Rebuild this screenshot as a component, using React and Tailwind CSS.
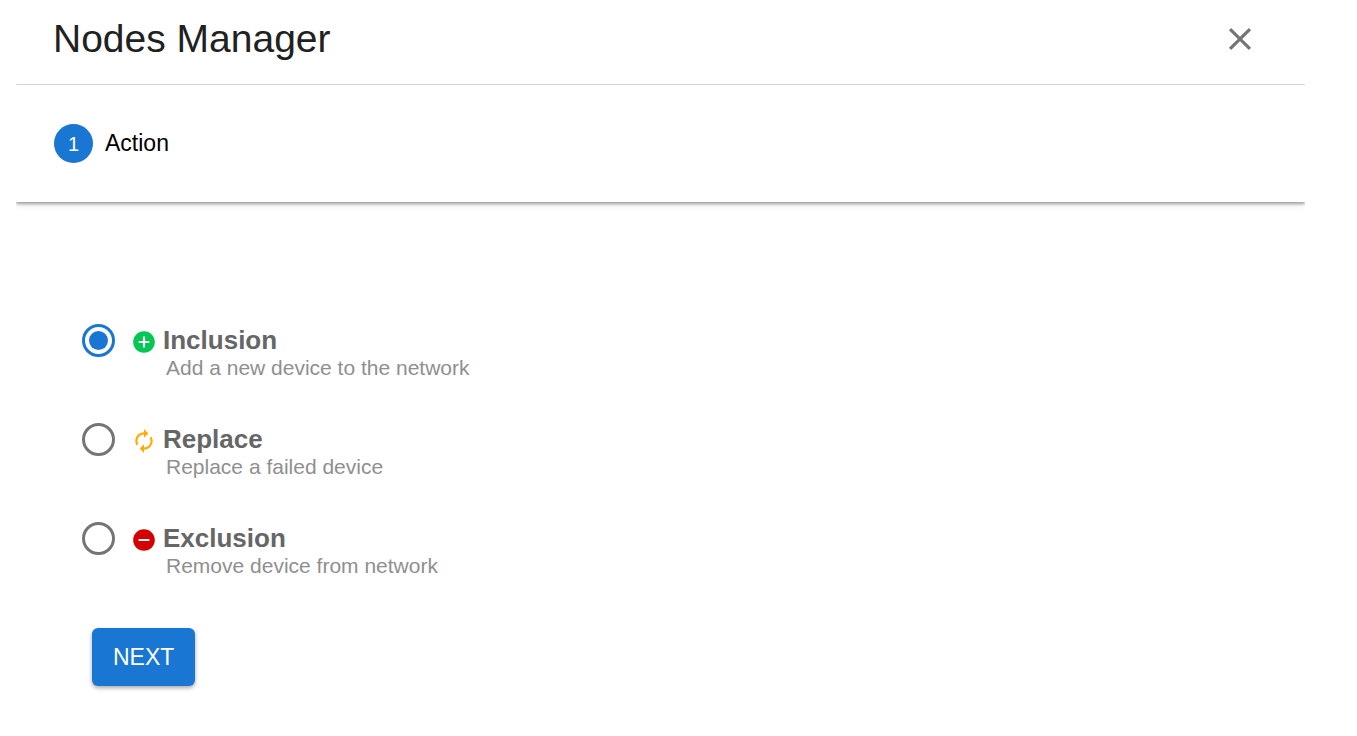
import React, { useState } from "react";
import { MdAddCircle, MdAutorenew, MdClose, MdRemoveCircle } from "react-icons/md";

const actions = [
  {
    id: "inclusion",
    title: "Inclusion",
    description: "Add a new device to the network",
    icon: <MdAddCircle size={26} className="text-[#00c853]" />,
  },
  {
    id: "replace",
    title: "Replace",
    description: "Replace a failed device",
    icon: <MdAutorenew size={26} className="text-[#ffab00]" />,
  },
  {
    id: "exclusion",
    title: "Exclusion",
    description: "Remove device from network",
    icon: <MdRemoveCircle size={26} className="text-[#d50000]" />,
  },
];

const ActionOption = ({ action, checked, onChange }) => {
  return (
    <div className="flex items-start">
      <input
        type="radio"
        id={action.id}
        name="action"
        checked={checked}
        onChange={onChange}
        aria-describedby={`${action.id}-description`}
        className="appearance-none shrink-0 w-[33px] h-[33px] rounded-full border-3 border-[#757575] bg-clip-content p-1 checked:border-[#1976d2] checked:bg-[#1976d2]"
      />
      <div className="ml-4">
        <label
          htmlFor={action.id}
          className="flex items-center h-8 gap-1.5 text-[26px] leading-8 font-bold text-[#666666]"
        >
          <span className="pt-1">{action.icon}</span>
          {action.title}
        </label>
        <p
          id={`${action.id}-description`}
          className="pl-[35px] text-[21px] leading-6 text-[#8f8f8f]"
        >
          {action.description}
        </p>
      </div>
    </div>
  );
};

export default function App() {
  const [selected, setSelected] = useState("inclusion");

  return (
    <div className="min-h-screen bg-white pl-4 pr-13 font-['Liberation_Sans',Arial,sans-serif]">
      <div className="overflow-hidden">
        {/* Title */}
        <header className="flex items-center justify-between h-[85px] pl-[37px] pr-[46px] pb-1.5 border-b border-[#dcdcdc]">
          <h1 className="text-[39px] leading-12 text-[#212121]">Nodes Manager</h1>
          <button type="button" aria-label="Close" className="text-[#757575]">
            <MdClose size={38} />
          </button>
        </header>

        {/* Stepper */}
        <ol className="flex items-center h-[117px] px-[38px] shadow-[0_2px_3px_rgba(0,0,0,0.35),0_4px_8px_rgba(0,0,0,0.06)]">
          <li className="flex items-center gap-3 text-[23px] text-black">
            <span className="flex items-center justify-center w-[39px] h-[39px] rounded-full bg-[#1976d2] text-xl text-white">
              1
            </span>
            Action
          </li>
        </ol>

        {/* Step content */}
        <form className="px-[66px] pt-[122px] pb-12" onSubmit={(e) => e.preventDefault()}>
          <fieldset aria-label="Action" className="flex flex-col gap-[43px]">
            {actions.map((action) => (
              <ActionOption
                key={action.id}
                action={action}
                checked={selected === action.id}
                onChange={() => setSelected(action.id)}
              />
            ))}
          </fieldset>
          <button
            type="submit"
            className="mt-[50px] ml-[10px] h-[58px] px-[21px] rounded-md bg-[#1976d2] text-[23px] text-white shadow-[0_2px_4px_rgba(0,0,0,0.35)]"
          >
            NEXT
          </button>
        </form>
      </div>
    </div>
  );
}
